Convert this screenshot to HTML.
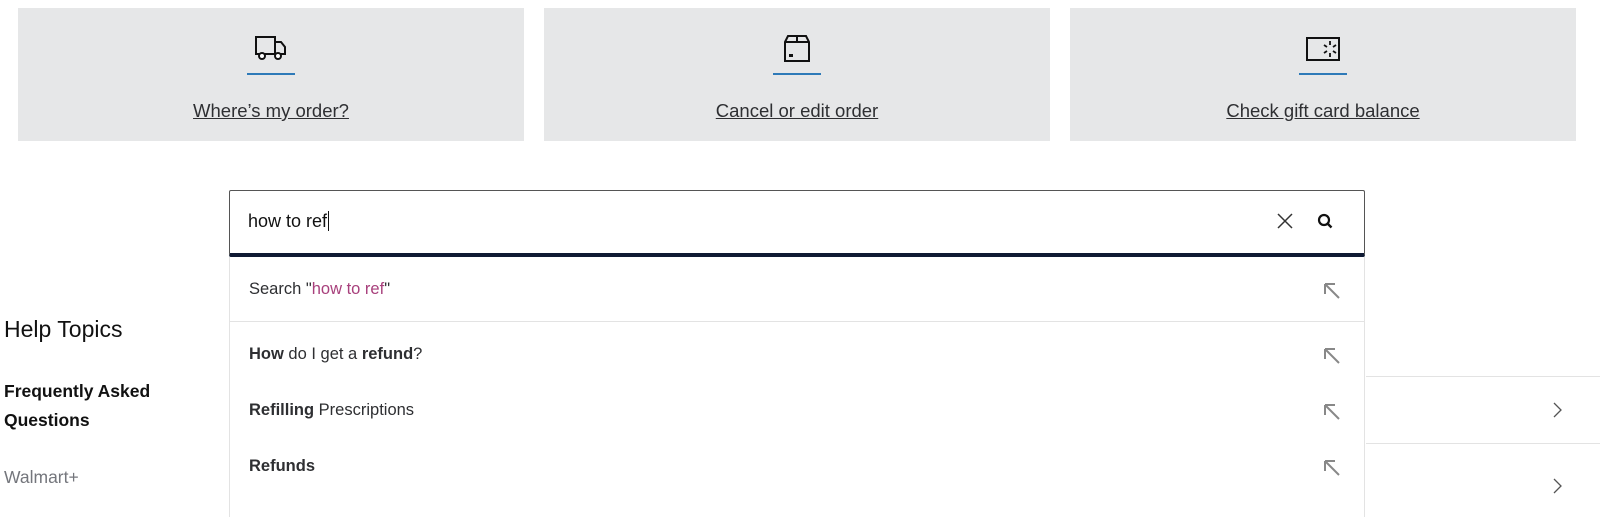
<!DOCTYPE html>
<html><head><style>
*{margin:0;padding:0;box-sizing:border-box}
body{width:1600px;height:507px;overflow:hidden;background:#fff;font-family:"Liberation Sans",sans-serif;color:#2e2f32;position:relative}
.a{position:absolute}
.card{position:absolute;top:8px;height:133px;width:506px;background:#e6e7e8}
.card svg{position:absolute;left:50%;top:25px;transform:translateX(-50%)}
.card .ul{position:absolute;left:50%;margin-left:-24px;top:65px;width:48px;height:2px;background:#2e7ab8}
.card .t{position:absolute;left:0;right:0;top:92px;text-align:center;font-size:18.5px;text-decoration:underline;color:#2e2f32}
.row{position:absolute;left:249px;font-size:16.5px;color:#2e2f32}
.arr{position:absolute;left:1322px}
</style></head><body>
<div class="card" style="left:18px">
<svg width="40" height="30" viewBox="0 0 38 30"><path d="M4 4h19v17H4z M23 9h6l4 5v7h-10" fill="none" stroke="#111" stroke-width="2"/><circle cx="10" cy="23" r="3" fill="#fff" stroke="#111" stroke-width="2"/><circle cx="26" cy="23" r="3" fill="#fff" stroke="#111" stroke-width="2"/></svg>
<div class="ul"></div><div class="t">Where’s my order?</div></div>
<div class="card" style="left:544px">
<svg width="34" height="30" viewBox="0 0 34 30"><path d="M5 9l3-6h18l3 6v19H5z M5 9h24 M17 3v6" fill="none" stroke="#111" stroke-width="2"/><rect x="9" y="21" width="4" height="3" fill="#111"/></svg>
<div class="ul"></div><div class="t">Cancel or edit order</div></div>
<div class="card" style="left:1070px">
<svg width="38" height="30" viewBox="0 0 38 30"><rect x="3" y="5" width="32" height="22" fill="none" stroke="#111" stroke-width="2"/><path d="M26 8v4M26 20v4M20 12l3 2M32 12l-3 2M20 20l3-2M32 20l-3-2" stroke="#111" stroke-width="1.8"/></svg>
<div class="ul"></div><div class="t">Check gift card balance</div></div>

<div class="a" style="left:229px;top:190px;width:1136px;height:67px;border:1px solid #555;border-bottom:4px solid #0f1a33;border-radius:2px"></div>
<div class="a" style="left:248px;top:211px;font-size:18px;color:#111">how to ref<span style="border-left:1px solid #111;margin-left:1px"></span></div>
<svg class="a" style="left:1276px;top:212px" width="18" height="18"><path d="M2 2l14 14M16 2L2 16" stroke="#333" stroke-width="1.5"/></svg>
<svg class="a" style="left:1316px;top:212px" width="18" height="18"><circle cx="8" cy="8" r="5" fill="none" stroke="#111" stroke-width="2.2"/><path d="M11.5 11.5l4 4" stroke="#111" stroke-width="2.4"/></svg>

<div class="a" style="left:229px;top:257px;width:1136px;height:260px;border-left:1px solid #e3e3e3;border-right:1px solid #e3e3e3"></div>
<div class="a" style="left:229px;top:321px;width:1136px;height:1px;background:#e3e3e3"></div>
<div class="row" style="top:280px">Search "<span style="color:#a8407c">how to ref</span>"</div>
<div class="row" style="top:345px"><b>How</b> do I get a <b>refund</b>?</div>
<div class="row" style="top:401px"><b>Refilling</b> Prescriptions</div>
<div class="row" style="top:457px"><b>Refunds</b></div>
<svg class="arr" style="top:281px" width="20" height="20"><path d="M3 3h10M3 3v10M3 3l14 14" fill="none" stroke="#888" stroke-width="2"/></svg>
<svg class="arr" style="top:346px" width="20" height="20"><path d="M3 3h10M3 3v10M3 3l14 14" fill="none" stroke="#888" stroke-width="2"/></svg>
<svg class="arr" style="top:402px" width="20" height="20"><path d="M3 3h10M3 3v10M3 3l14 14" fill="none" stroke="#888" stroke-width="2"/></svg>
<svg class="arr" style="top:458px" width="20" height="20"><path d="M3 3h10M3 3v10M3 3l14 14" fill="none" stroke="#888" stroke-width="2"/></svg>

<div class="a" style="left:1366px;top:376px;width:234px;height:1px;background:#e3e3e3"></div>
<div class="a" style="left:1366px;top:443px;width:234px;height:1px;background:#e3e3e3"></div>
<svg class="a" style="left:1552px;top:401px" width="12" height="18"><path d="M2 2l7 7-7 7" fill="none" stroke="#555" stroke-width="1.3"/></svg>
<svg class="a" style="left:1552px;top:477px" width="12" height="18"><path d="M2 2l7 7-7 7" fill="none" stroke="#555" stroke-width="1.3"/></svg>

<div class="a" style="left:4px;top:316px;font-size:23px;color:#111">Help Topics</div>
<div class="a" style="left:4px;top:377px;font-size:17.5px;font-weight:bold;line-height:29px;color:#111">Frequently Asked<br>Questions</div>
<div class="a" style="left:4px;top:467px;font-size:17.5px;color:#74767c">Walmart+</div>
</body></html>
